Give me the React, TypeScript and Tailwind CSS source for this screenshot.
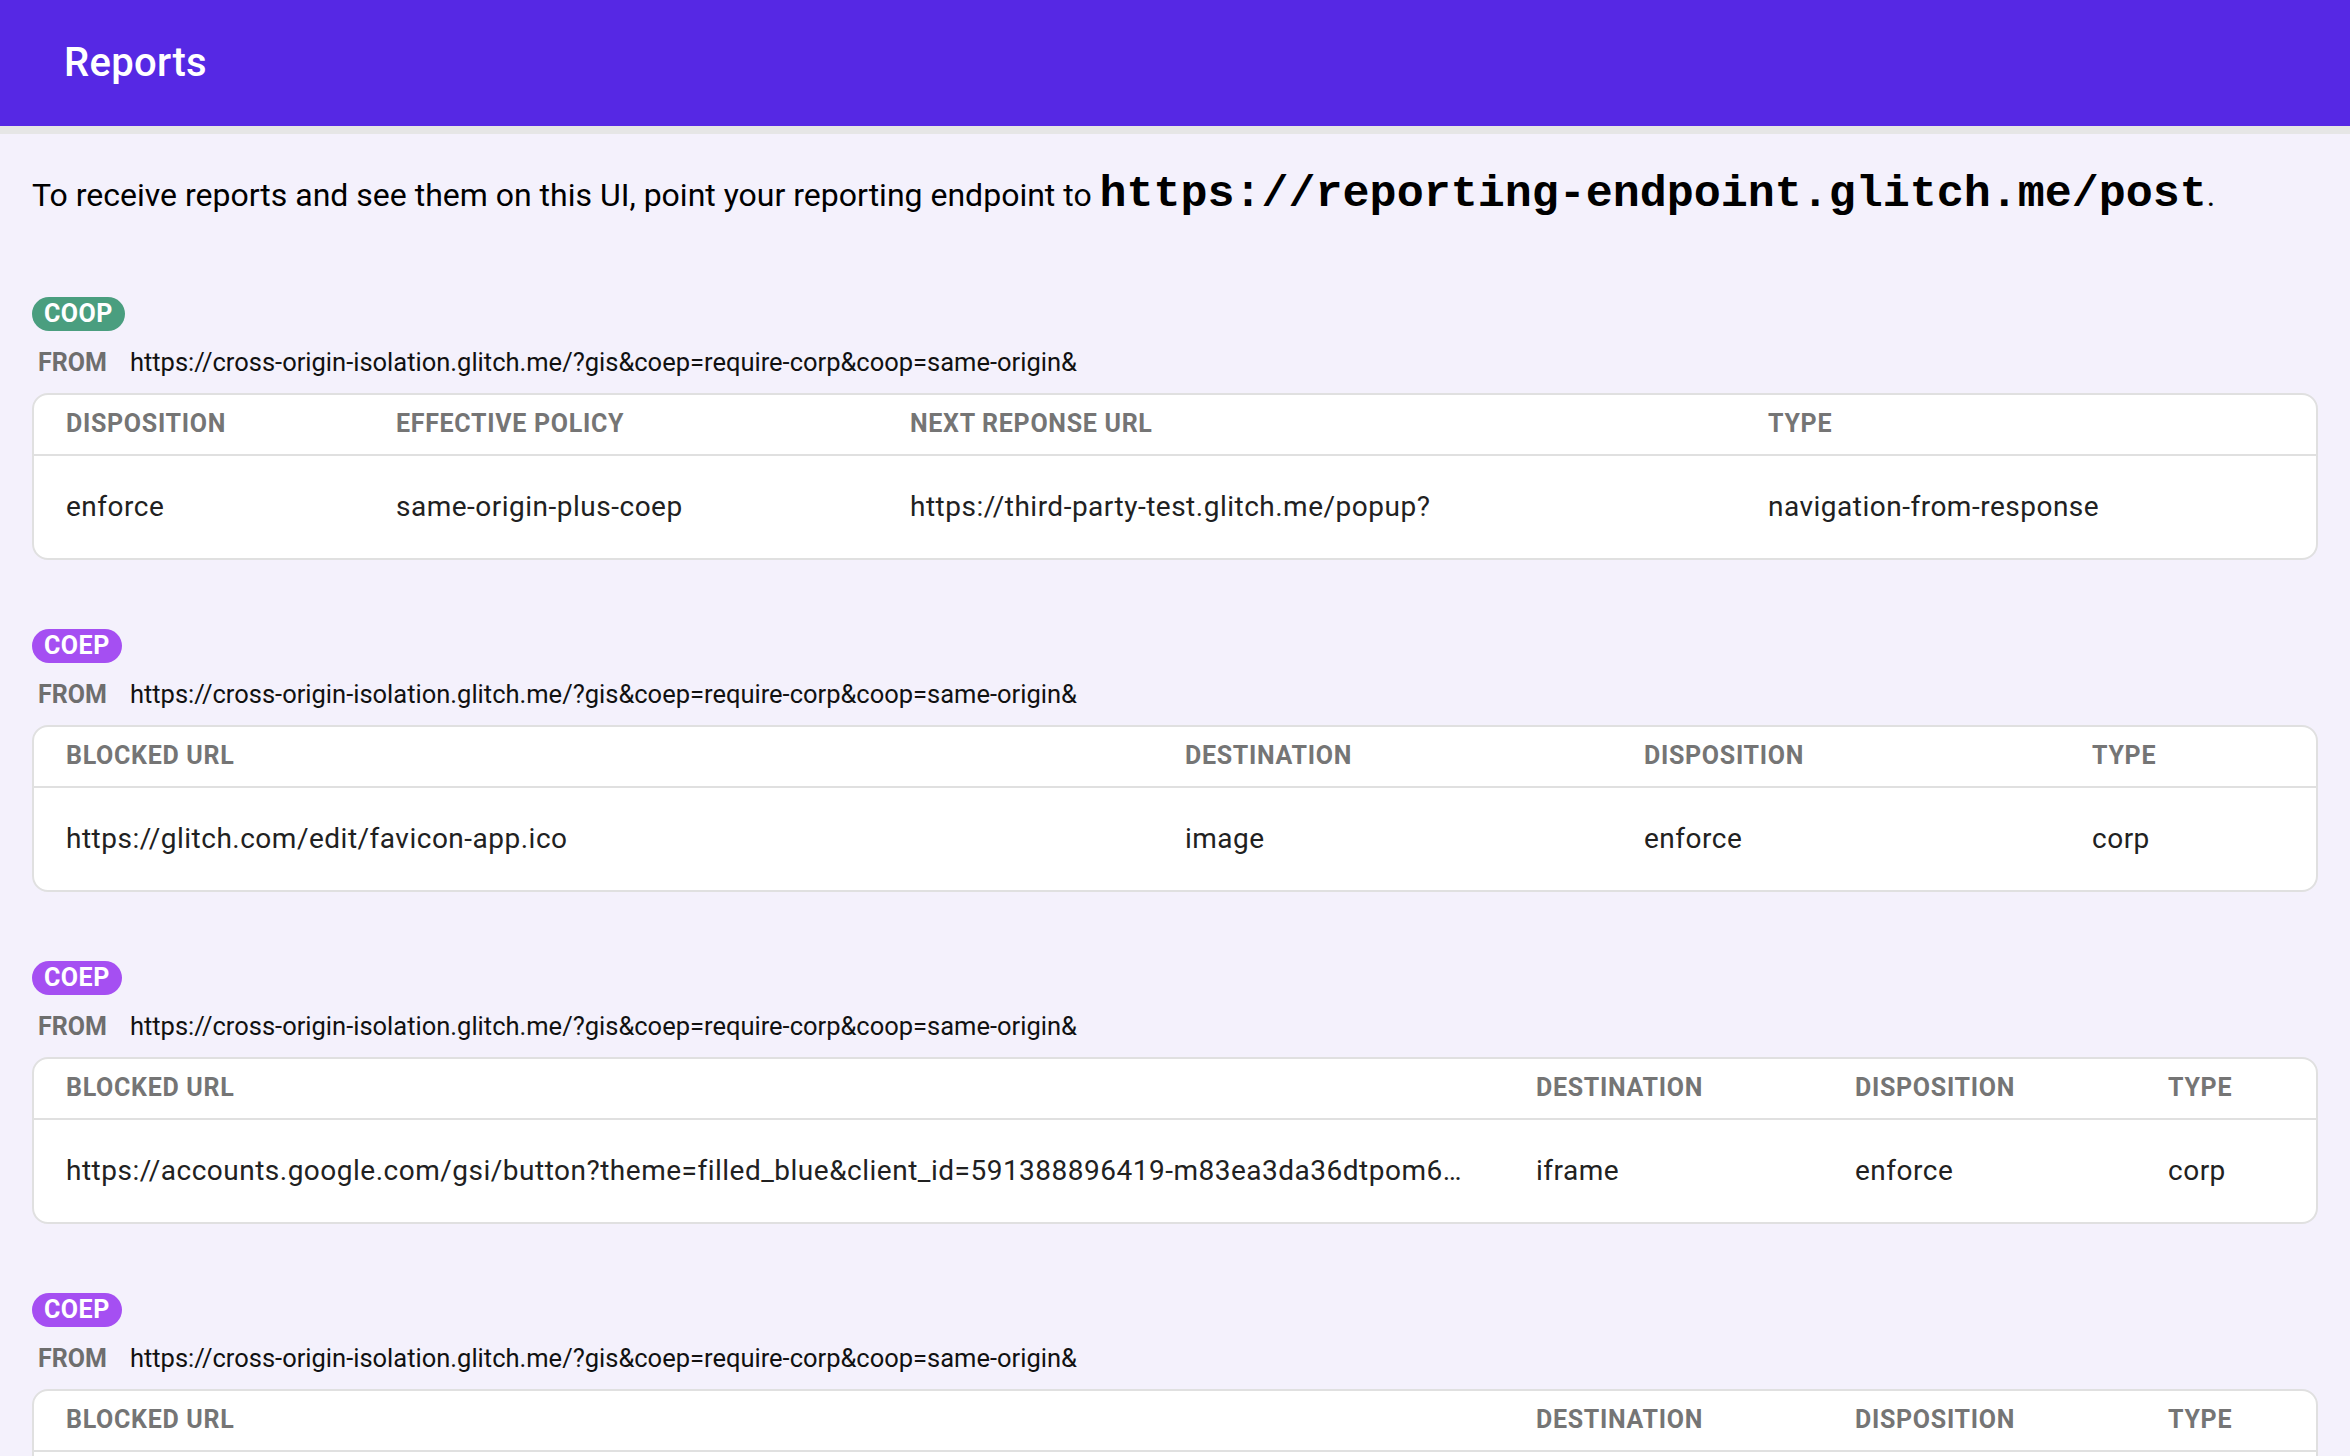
import React from "react";

type Column = {
  label: string;
  width: string;
};

type Report = {
  id: number;
  type: "COOP" | "COEP";
  from: string;
  columns: Column[];
  values: string[];
};

const FROM_URL =
  "https://cross-origin-isolation.glitch.me/?gis&coep=require-corp&coop=same-origin&";

const GSI_URL =
  "https://accounts.google.com/gsi/button?theme=filled_blue&client_id=591388896419-m83ea3da36dtpom6n6e1rsd0ss1kt2ml.apps.googleusercontent.com&iframe_id=gsi_123_456";

const reports: Report[] = [
  {
    id: 1,
    type: "COOP",
    from: FROM_URL,
    columns: [
      { label: "Disposition", width: "w-[330px]" },
      { label: "Effective Policy", width: "w-[514px]" },
      { label: "Next Reponse URL", width: "w-[858px]" },
      { label: "Type", width: "w-auto" },
    ],
    values: [
      "enforce",
      "same-origin-plus-coep",
      "https://third-party-test.glitch.me/popup?",
      "navigation-from-response",
    ],
  },
  {
    id: 2,
    type: "COEP",
    from: FROM_URL,
    columns: [
      { label: "Blocked URL", width: "w-[1119px]" },
      { label: "Destination", width: "w-[459px]" },
      { label: "Disposition", width: "w-[448px]" },
      { label: "Type", width: "w-auto" },
    ],
    values: [
      "https://glitch.com/edit/favicon-app.ico",
      "image",
      "enforce",
      "corp",
    ],
  },
  {
    id: 3,
    type: "COEP",
    from: FROM_URL,
    columns: [
      { label: "Blocked URL", width: "w-[1470px]" },
      { label: "Destination", width: "w-[319px]" },
      { label: "Disposition", width: "w-[313px]" },
      { label: "Type", width: "w-auto" },
    ],
    values: [GSI_URL, "iframe", "enforce", "corp"],
  },
  {
    id: 4,
    type: "COEP",
    from: FROM_URL,
    columns: [
      { label: "Blocked URL", width: "w-[1470px]" },
      { label: "Destination", width: "w-[319px]" },
      { label: "Disposition", width: "w-[313px]" },
      { label: "Type", width: "w-auto" },
    ],
    values: [GSI_URL, "iframe", "enforce", "corp"],
  },
];

const Badge = ({ type }: { type: Report["type"] }) => {
  const color = type === "COOP" ? "bg-[#4a9e7f]" : "bg-[#a54ff2]";
  return (
    <span
      className={`inline-flex h-[34px] items-center rounded-full px-[12px] text-[25px] font-bold uppercase leading-none tracking-[0.5px] text-white ${color}`}
    >
      {type}
    </span>
  );
};

const ReportCard = ({ report }: { report: Report }) => {
  return (
    <section className="mb-[69px]">
      <Badge type={report.type} />
      <div className="mt-4 flex items-baseline pl-[6px] leading-[30px]">
        <span className="text-[25px] font-bold text-[#6e6e6e]">FROM</span>
        <span className="ml-[23px] text-[25.5px] text-[#111111]">
          {report.from}
        </span>
      </div>
      <div className="mt-[15px] overflow-hidden rounded-[16px] border-2 border-[#e0e0e0] bg-white">
        <table className="w-full table-fixed">
          <colgroup>
            {report.columns.map((col) => (
              <col key={col.label} className={col.width} />
            ))}
          </colgroup>
          <thead>
            <tr>
              {report.columns.map((col) => (
                <th
                  key={col.label}
                  className="h-[60px] border-b-2 border-[#e0e0e0] px-8 text-left text-[25px] font-bold uppercase tracking-[0.7px] text-[#757575]"
                >
                  {col.label}
                </th>
              ))}
            </tr>
          </thead>
          <tbody>
            <tr>
              {report.values.map((value, i) => (
                <td
                  key={i}
                  className="h-[103px] truncate px-8 text-[28px] tracking-[0.5px] text-[#212121]"
                >
                  {value}
                </td>
              ))}
            </tr>
          </tbody>
        </table>
      </div>
    </section>
  );
};

const App = () => {
  return (
    <div className="min-h-screen bg-[#f4f1fc] font-['Roboto',sans-serif]">
      <header className="flex h-[134px] items-center border-b-8 border-[#e6e6e6] bg-[#5628e4] pl-16">
        <h1 className="text-[40px] font-medium tracking-[0.3px] text-white">
          Reports
        </h1>
      </header>
      <main className="px-8">
        <p className="mt-[27px] text-[32px] text-black">
          To receive reports and see them on this UI, point your reporting
          endpoint to{" "}
          <code className="font-['Liberation_Mono',monospace] text-[45px] font-bold">
            https://reporting-endpoint.glitch.me/post
          </code>
          .
        </p>
        <div className="mt-[68px]">
          {reports.map((report) => (
            <ReportCard key={report.id} report={report} />
          ))}
        </div>
      </main>
    </div>
  );
};

export default App;
